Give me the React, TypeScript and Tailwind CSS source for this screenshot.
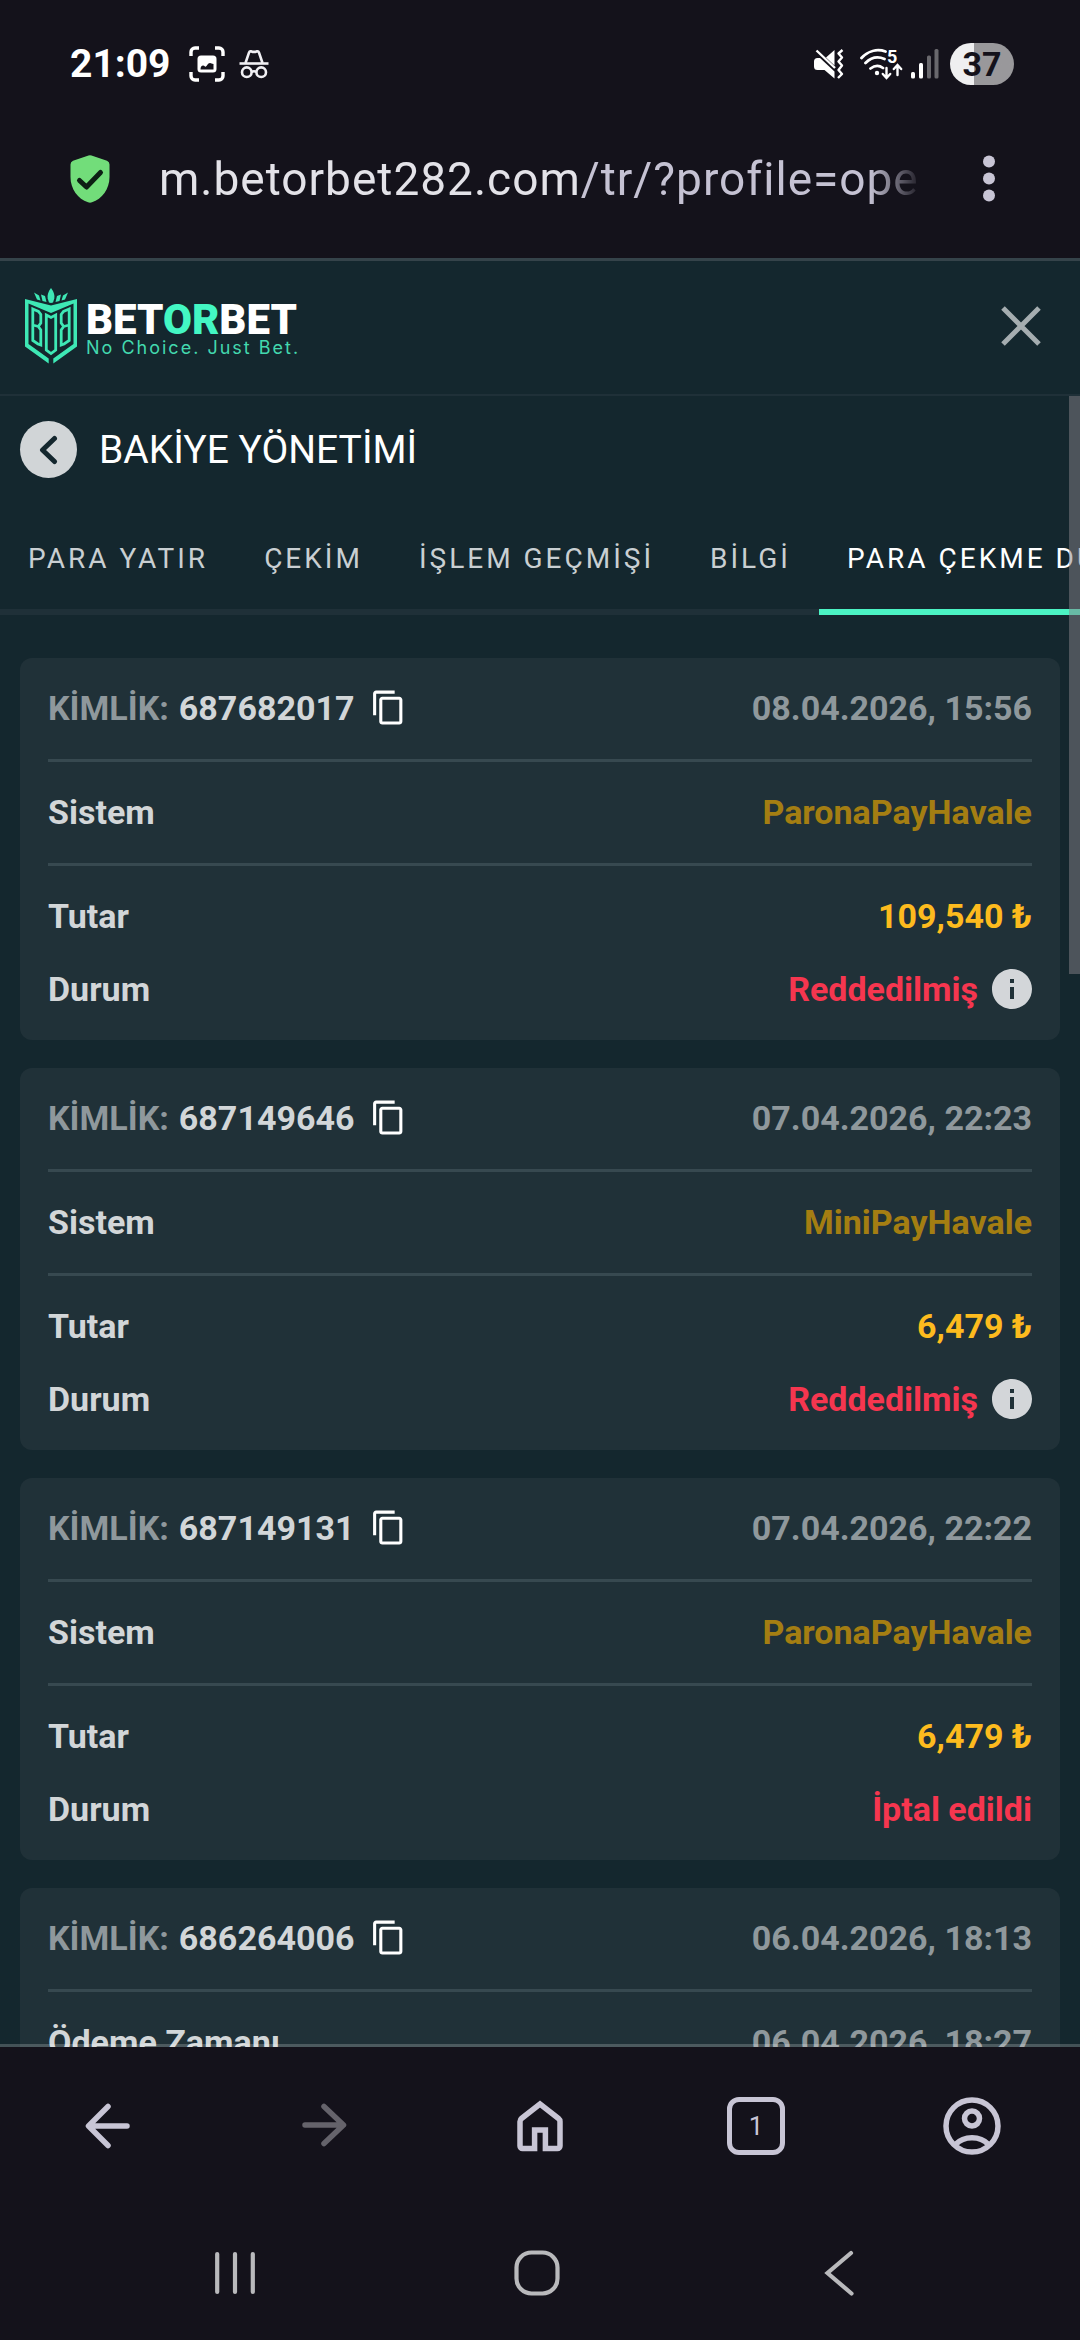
import React, { useState } from "react";
import { MdContentCopy } from "react-icons/md";

interface Detail {
  label: string;
  value: string;
  tone: "muted" | "system" | "amount" | "danger";
  info?: boolean;
}

interface Withdrawal {
  id: string;
  date: string;
  // each group is separated by a divider line
  groups: Detail[][];
}

const TABS = [
  "PARA YATIR",
  "ÇEKİM",
  "İŞLEM GEÇMİŞİ",
  "BİLGİ",
  "PARA ÇEKME DURUMU",
];

const WITHDRAWALS: Withdrawal[] = [
  {
    id: "687682017",
    date: "08.04.2026, 15:56",
    groups: [
      [{ label: "Sistem", value: "ParonaPayHavale", tone: "system" }],
      [
        { label: "Tutar", value: "109,540 ₺", tone: "amount" },
        { label: "Durum", value: "Reddedilmiş", tone: "danger", info: true },
      ],
    ],
  },
  {
    id: "687149646",
    date: "07.04.2026, 22:23",
    groups: [
      [{ label: "Sistem", value: "MiniPayHavale", tone: "system" }],
      [
        { label: "Tutar", value: "6,479 ₺", tone: "amount" },
        { label: "Durum", value: "Reddedilmiş", tone: "danger", info: true },
      ],
    ],
  },
  {
    id: "687149131",
    date: "07.04.2026, 22:22",
    groups: [
      [{ label: "Sistem", value: "ParonaPayHavale", tone: "system" }],
      [
        { label: "Tutar", value: "6,479 ₺", tone: "amount" },
        { label: "Durum", value: "İptal edildi", tone: "danger" },
      ],
    ],
  },
  {
    id: "686264006",
    date: "06.04.2026, 18:13",
    groups: [
      [{ label: "Ödeme Zamanı", value: "06.04.2026, 18:27", tone: "muted" }],
    ],
  },
];

const TONES = {
  muted: "text-[#8f989c]",
  system: "text-[#a47e12]",
  amount: "text-[#fdbb1e]",
  danger: "text-[#f6364f]",
};

/* ---------- status bar ---------- */

const ScreenshotIcon = () => (
  <svg width="36" height="36" viewBox="0 0 36 36" aria-hidden="true">
    <path
      d="M2 10V6a4 4 0 0 1 4-4h4M26 2h4a4 4 0 0 1 4 4v4M34 26v4a4 4 0 0 1-4 4h-4M10 34H6a4 4 0 0 1-4-4v-4"
      fill="none"
      stroke="#fff"
      strokeWidth="3.4"
    />
    <rect x="8.500" y="9.500" width="19" height="17" rx="3.5" fill="#fff" />
    <path
      d="M11.500 23.500c0-2.500 1-4 2.700-4 1.300 0 1.300 1.200 2.300 1.200 1.500 0 2-3.700 4.500-3.700 1.500 0 1.500 1 3.500 1v5.500Z"
      fill="#14121b"
    />
  </svg>
);

const IncognitoIcon = () => (
  <svg
    width="30"
    height="30"
    viewBox="0 0 30 30"
    fill="none"
    stroke="#f1f0f4"
    strokeWidth="2.600"
    aria-hidden="true"
  >
    <path d="M.5 14.500h29" />
    <path d="M6.500 14 10 3.600C10.400 2.400 11 2 12 2.300l1.600.6h2.800l1.600-.6c1-.3 1.600.1 2 1.300L23.500 14" />
    <circle cx="7.800" cy="23.200" r="4.800" />
    <circle cx="22.200" cy="23.200" r="4.800" />
    <path d="M12.500 23q2.500-1.600 5 0" />
  </svg>
);

const MuteIcon = () => (
  <svg width="30" height="30" viewBox="0 0 30 30" fill="#fff" aria-hidden="true">
    <path d="M20.500 1v15.500L12 8.500ZM0 12.500a3.500 3.500 0 0 1 3.500-3.500H6L20.500 22.500V29.500L10.500 21H3.500A3.500 3.500 0 0 1 0 17.500Z" />
    <path
      d="M2.500 1.500 21 19M28.500 1 24.500 4.500l3.500 4-3.500 4 3.500 4-3.500 4.500 3.500 4-4 4"
      fill="none"
      stroke="#fff"
      strokeWidth="2.400"
      strokeLinejoin="round"
    />
  </svg>
);

const WifiIcon = () => (
  <svg
    width="43"
    height="32"
    viewBox="0 0 43 32"
    fill="none"
    stroke="#fff"
    strokeWidth="2.800"
    strokeLinecap="round"
    aria-hidden="true"
  >
    <path d="M1.500 10C8 3 17 .500 25.500 3.500M5.500 15c5.500-5.500 12-7 19-4M10.500 20.500c4-3 8.500-3.500 12.500-.5" />
    <circle cx="17" cy="25" r="2.200" fill="#fff" stroke="none" />
    <path d="M26.500 20v9M22.800 26l3.700 4 3.700-4M37.500 27v-9M33.800 21l3.700-4 3.700 4" strokeWidth="2.400" />
    <text
      x="27"
      y="15"
      fill="#fff"
      stroke="none"
      fontFamily="Roboto, sans-serif"
      fontSize="18"
      fontWeight="700"
    >
      5
    </text>
  </svg>
);

const SignalIcon = () => (
  <svg width="28" height="30" viewBox="0 0 28 30" aria-hidden="true">
    <rect x="0" y="23" width="4" height="6.500" rx="1.500" fill="#fff" />
    <rect x="8" y="14" width="4" height="15.500" rx="1.500" fill="#fff" />
    <rect x="16" y="6.500" width="4" height="23" rx="1.500" fill="#69686d" />
    <rect x="23.500" y="0" width="4" height="29.500" rx="1.500" fill="#69686d" />
  </svg>
);

const StatusBar = () => (
  <div className="flex h-32 shrink-0 items-center justify-between pr-[66px] pl-[70px]">
    <div className="flex items-center">
      <span className="text-[39px] leading-none font-bold text-white">
        21:09
      </span>
      <span className="ml-[18px]">
        <ScreenshotIcon />
      </span>
      <span className="ml-[14px]">
        <IncognitoIcon />
      </span>
    </div>
    <div className="flex items-center">
      <MuteIcon />
      <span className="ml-4">
        <WifiIcon />
      </span>
      <span className="ml-2">
        <SignalIcon />
      </span>
      <span className="ml-[11px] flex h-[42px] w-16 items-center justify-center rounded-full bg-linear-to-r from-[#efeff0] from-37% to-[#99989b] to-37% text-[34px] leading-none font-bold text-[#14121b]">
        37
      </span>
    </div>
  </div>
);

/* ---------- browser toolbar ---------- */

const AddressBar = () => (
  <div className="flex h-[130px] shrink-0 items-center pr-[85px] pb-7 pl-[70px]">
    <button type="button" aria-label="Site güvenliği" className="shrink-0">
      <svg width="40" height="48" viewBox="0 0 40 48">
        <path
          d="M18.500.5Q20 0 21.500.5L37 5.800Q39.500 6.800 39.500 9.500V22C39.500 34 32 44 22 47.300Q20 48 18 47.300C8 44 .5 34 .5 22V9.500Q.5 6.800 3 5.800Z"
          fill="#72dd7a"
        />
        <path
          d="M9.500 25.500 16.500 32 30.500 17.500"
          fill="none"
          stroke="#0d1f14"
          strokeWidth="5"
          strokeLinecap="round"
          strokeLinejoin="round"
        />
      </svg>
    </button>
    <button
      type="button"
      aria-label="Adres çubuğu"
      className="mr-[60px] ml-[49px] min-w-0 flex-1 overflow-hidden text-left text-[46px] leading-[54px] tracking-[1px] whitespace-nowrap text-[#c5c2d3] [mask-image:linear-gradient(to_right,black_93%,transparent)]"
    >
      <span className="text-[#e3e2e8]">m.betorbet282.com</span>
      /tr/?profile=ope
    </button>
    <button type="button" aria-label="Menü" className="shrink-0">
      <svg width="12" height="48" viewBox="0 0 12 48" fill="#c8c5d5">
        <circle cx="6" cy="6.500" r="6" />
        <circle cx="6" cy="23.500" r="6" />
        <circle cx="6" cy="40.500" r="6" />
      </svg>
    </button>
  </div>
);

/* ---------- site header ---------- */

const Emblem = () => (
  <svg width="52" height="76" viewBox="0 0 52 76" fill="#3ee8b5" aria-hidden="true">
    {/* crown */}
    <path d="M26 0c3 4 3.800 7 3.300 10.500L28 14.500l-2 .6-2-.6-1.300-4C22.200 7 23 4 26 0Z" />
    <path d="M16 6.500l4 1.500 1.500 6L17.500 13ZM36 6.500 32 8l-1.500 6 4-1ZM9 4.500l5 3 1.500 5L12 11.500ZM43 4.500l-5 3-1.500 5 3.500-1Z" />
    {/* frame */}
    <path d="M0 11l26 6.500L52 11v47.500L28.300 75.500V70.500L48.500 56V15.500L26 25 3.500 15.500V56L23.700 70.500v5L0 58.500Z" />
    {/* monogram */}
    <g fill="none" stroke="#3ee8b5" strokeWidth="2.800">
      <path d="M7.800 21 13.500 23.500 15.800 26.500v8.500L13.300 38.500 15.800 42v15L13 56 7.800 52.500ZM7.800 37l5.500 1.500" />
      <path d="M44.200 21 38.500 23.500 36.200 26.500v8.500L38.700 38.500 36.200 42v15L39 56 44.200 52.500ZM44.200 37l-5.500 1.500" />
      <path d="M21.300 27 26 29.500 30.700 27v35L26 65.500 21.300 62Z" />
    </g>
  </svg>
);

const SiteHeader = () => (
  <header className="flex shrink-0 items-center justify-between border-b-2 border-[#1f3038] pt-[27px] pr-[39px] pb-[30px] pl-[25px]">
    <a href="#" aria-label="BETORBET" className="flex items-center gap-[9px]">
      <Emblem />
      <span className="flex flex-col pt-2">
        <span className="text-[42px] leading-[36px] font-black text-white">
          BET<span className="text-[#43f7c3]">OR</span>BET
        </span>
        <span className="font-[Inter,sans-serif] text-[18px] leading-5 tracking-[2px] text-[#43d9ae]">
          No Choice. Just Bet.
        </span>
      </span>
    </a>
    <button type="button" aria-label="Kapat">
      <svg
        width="40"
        height="40"
        viewBox="0 0 40 40"
        stroke="#a5adb0"
        strokeWidth="5"
      >
        <path d="M2 2l36 36M38 2 2 38" />
      </svg>
    </button>
  </header>
);

const TabBar = () => {
  const [active, setActive] = useState(4);

  return (
    <nav className="flex overflow-hidden pt-8">
      {TABS.map((tab, i) => (
        <button
          key={tab}
          type="button"
          onClick={() => setActive(i)}
          className={`shrink-0 border-b-[6px] px-7 pt-8 pb-[34px] text-[28px] leading-[33px] tracking-[3px] whitespace-nowrap ${
            active === i
              ? "border-[#4bf3c3] text-white"
              : "border-[#1f3038] text-[#c9cfd2]"
          }`}
        >
          {tab}
        </button>
      ))}
    </nav>
  );
};

/* ---------- withdrawals ---------- */

const InfoIcon = () => (
  <svg width="40" height="40" viewBox="2 2 20 20" fill="#d3d6d9">
    <path d="M12 2C6.480 2 2 6.480 2 12s4.480 10 10 10 10-4.480 10-10S17.520 2 12 2zm1 15h-2v-6h2v6zm0-8h-2V7h2v2z" />
  </svg>
);

const DetailRow: React.FC<{ detail: Detail }> = ({ detail }) => (
  <div className="flex h-[45px] items-center justify-between">
    <dt className="text-[#d2d6d8]">{detail.label}</dt>
    <dd className={`flex items-center gap-[14px] ${TONES[detail.tone]}`}>
      {detail.value}
      {detail.info && (
        <button type="button" aria-label="Bilgi">
          <InfoIcon />
        </button>
      )}
    </dd>
  </div>
);

const WithdrawalCard: React.FC<{ item: Withdrawal }> = ({ item }) => (
  <article className="rounded-xl bg-[#203138] px-7 text-[34px] leading-[44px] font-bold">
    <div className="flex items-center justify-between pt-[27px] pb-[29px]">
      <div className="flex h-[45px] items-center">
        <span className="text-[#8f989c]">KİMLİK:</span>
        <span className="ml-[10px] text-[#d2d6d8]">{item.id}</span>
        <button type="button" aria-label="Kopyala" className="ml-4 text-white">
          <MdContentCopy size={37} />
        </button>
      </div>
      <span className="text-[#8f989c]">{item.date}</span>
    </div>
    {item.groups.map((group, i) => (
      <dl
        key={i}
        className="flex flex-col gap-7 border-t-[3px] border-[#374950] pt-[27px] pb-[29px]"
      >
        {group.map((detail) => (
          <DetailRow key={detail.label} detail={detail} />
        ))}
      </dl>
    ))}
  </article>
);

/* ---------- bottom bars ---------- */

const BrowserNav = () => (
  <nav className="relative -mt-[3px] grid h-[161px] shrink-0 grid-cols-5 place-items-center border-t-[3px] border-white/20 bg-[#14121b] bg-clip-padding text-[#c8c5d5]">
    <button type="button" aria-label="Geri">
      <svg width="46" height="46" viewBox="0 0 46 46" fill="none" stroke="currentColor" strokeWidth="5.500" strokeLinecap="round" strokeLinejoin="round">
        <path d="M42 23H4M23 3.500 3.500 23 23 42.500" />
      </svg>
    </button>
    <button type="button" aria-label="İleri" disabled className="text-[#65636b]">
      <svg width="46" height="46" viewBox="0 0 46 46" fill="none" stroke="currentColor" strokeWidth="5.500" strokeLinecap="round" strokeLinejoin="round">
        <path d="M4 22h38M23 3.500 42.500 22 23 40.500" />
      </svg>
    </button>
    <button type="button" aria-label="Ana sayfa">
      <svg width="48" height="54" viewBox="0 0 48 54" fill="none" stroke="currentColor" strokeWidth="5.500">
        <path d="M18.600 49.500H6.500a2.500 2.500 0 0 1-2.500-2.500V22.500a4 4 0 0 1 1.500-3L24 5l18.500 14.500a4 4 0 0 1 1.500 3V47a2.500 2.500 0 0 1-2.500 2.500H29.400V31H18.600Z" />
      </svg>
    </button>
    <button
      type="button"
      aria-label="Sekmeler"
      className="flex h-[58px] w-[58px] items-center justify-center rounded-xl border-[5px] border-current text-[26px] leading-none"
    >
      1
    </button>
    <button type="button" aria-label="Profil">
      <svg width="58" height="58" viewBox="0 0 58 58" fill="none" stroke="currentColor" strokeWidth="5.500">
        <circle cx="29" cy="29" r="26" />
        <circle cx="29" cy="21.500" r="7.500" />
        <path d="M12.500 47.500C21 38.500 37 38.500 45.500 47.500" />
      </svg>
    </button>
  </nav>
);

const SystemNav = () => (
  <nav className="grid h-[135px] shrink-0 grid-cols-3 place-items-center pr-[90px] pl-[84px] text-[#b9b9bc]">
    <button type="button" aria-label="Son uygulamalar">
      <svg width="40" height="44" viewBox="0 0 40 44" stroke="currentColor" strokeWidth="4.200" strokeLinecap="round">
        <path d="M2.200 3v38M20 3v38M37.800 3v38" />
      </svg>
    </button>
    <button type="button" aria-label="Ana ekran">
      <svg width="46" height="46" viewBox="0 0 46 46" fill="none" stroke="currentColor" strokeWidth="4.200">
        <rect x="2.500" y="2.500" width="41" height="41" rx="15" />
      </svg>
    </button>
    <button type="button" aria-label="Geri dön">
      <svg width="30" height="46" viewBox="0 0 30 46" fill="none" stroke="currentColor" strokeWidth="4.200" strokeLinecap="round">
        <path d="M27 3 3.500 23 27.500 43.500" />
      </svg>
    </button>
  </nav>
);

const App: React.FC = () => {
  return (
    <div className="flex h-screen flex-col overflow-hidden bg-[#14121b] font-[Roboto,sans-serif]">
      <StatusBar />
      <AddressBar />

      <div className="flex min-h-0 flex-1 flex-col border-t-[3px] border-[#35434a] bg-[#14272e]">
        <SiteHeader />

        <main className="relative min-h-0 flex-1 overflow-hidden">
          <div className="flex items-center gap-[22px] px-5 pt-[25px]">
            <button
              type="button"
              aria-label="Geri"
              className="flex h-[57px] w-[57px] items-center justify-center rounded-full bg-[#d1d5d7]"
            >
              <svg width="20" height="32" viewBox="0 0 20 32" fill="none" stroke="#14272e" strokeWidth="5" strokeLinecap="round" strokeLinejoin="round">
                <path d="M15.500 4.500 3.500 16 15.500 27.500" />
              </svg>
            </button>
            <h1 className="text-[39px] leading-[46px] text-white">
              BAKİYE YÖNETİMİ
            </h1>
          </div>

          <TabBar />

          <div className="mt-[43px] flex flex-col gap-7 px-5">
            {WITHDRAWALS.map((item) => (
              <WithdrawalCard key={item.id} item={item} />
            ))}
          </div>

          {/* scrollbar thumb */}
          <div className="absolute top-0 right-0 h-[35%] w-[11px] bg-[#868287]/50" />
        </main>
      </div>

      <BrowserNav />
      <SystemNav />
    </div>
  );
};

export default App;
